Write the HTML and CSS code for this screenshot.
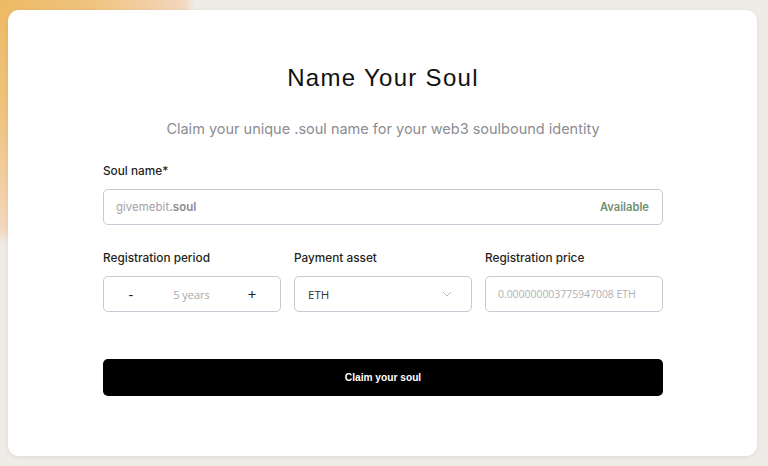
FILE: index.html
```html
<!DOCTYPE html>
<html lang="en">
<head>
<meta charset="utf-8">
<title>Name Your Soul</title>
<link rel="stylesheet" href="styles.css">
</head>
<body>
<main class="card">
  <h1 class="title">Name Your Soul</h1>
  <p class="subtitle">Claim your unique .soul name for your web3 soulbound identity</p>

  <div class="field">
    <label class="label">Soul name*</label>
    <div class="box name-box">
      <span class="name-value">givemebit<b>.soul</b></span>
      <span class="available">Available</span>
    </div>
  </div>

  <div class="row">
    <div class="field">
      <label class="label">Registration period</label>
      <div class="box period-box">
        <span class="step">-</span>
        <span class="period">5 years</span>
        <span class="step">+</span>
      </div>
    </div>
    <div class="field">
      <label class="label">Payment asset</label>
      <div class="box asset-box">
        <span class="asset">ETH</span>
        <svg class="chevron" width="10" height="6" viewBox="0 0 10 6"><path d="M1 1l4 4 4-4" fill="none" stroke="#b9b9c0" stroke-width="1"/></svg>
      </div>
    </div>
    <div class="field">
      <label class="label">Registration price</label>
      <div class="box price-box">
        <span class="price">0.000000003775947008 ETH</span>
      </div>
    </div>
  </div>

  <button class="claim">Claim your soul</button>
</main>
</body>
</html>
```
FILE: styles.css
```css
* { box-sizing: border-box; }
html, body { height: 100%; }
body {
  margin: 0;
  padding: 10px 11px 10px 8px;
  background:
    radial-gradient(ellipse 195px 245px at 0 0, #edba65 0%, #efc37c 45%, #f2cea3 75%, #f3d8bf 94%, rgba(239,236,231,0) 100%),
    #efece7;
  font-family: Inter, "Noto Sans", sans-serif;
}
.card {
  height: 446px;
  background: #fff;
  border-radius: 11px;
  box-shadow: 0 1px 4px rgba(0,0,0,0.08);
  padding: 52px 94px 0 95px;
  display: flex;
  flex-direction: column;
}
.title {
  margin: 0;
  text-align: center;
  font-family: "Liberation Sans", Inter, sans-serif;
  font-weight: 400;
  font-size: 24px;
  line-height: 32px;
  letter-spacing: 1.3px;
  color: #111;
}
.subtitle {
  margin: 25px 0 0;
  text-align: center;
  font-size: 14.5px;
  line-height: 20px;
  color: #8c8c92;
  font-weight: 400;
}
.field {
  display: flex;
  flex-direction: column;
  gap: 9px;
  margin-top: 23px;
}
.label {
  font-size: 11.8px;
  line-height: 18px;
  color: #1f1f22;
  font-weight: 450;
}
.box {
  height: 36px;
  border: 1px solid #c9c9d6;
  border-radius: 5px;
  display: flex;
  align-items: center;
}
.name-box {
  justify-content: space-between;
  padding: 0 13px 0 12px;
  font-size: 11.5px;
}
.name-value { color: #a3a3a8; }
.name-value b { color: #8b8b92; font-weight: 600; }
.available { color: #6f8f72; font-weight: 600; font-size: 11.2px; }
.row {
  display: grid;
  grid-template-columns: repeat(3, 1fr);
  gap: 13px;
  margin-top: 1px;
}
.row .field { margin-top: 23px; }
.period-box {
  justify-content: space-between;
  padding: 0 23px 0 22px;
  font-family: "Open Sans", sans-serif;
}
.step { font-size: 15px; color: #222; width: 10px; text-align: center; }
.period { font-size: 11px; color: #a6a6ab; }
.asset-box {
  justify-content: space-between;
  padding: 0 19px 0 13px;
  font-family: "Open Sans", sans-serif;
}
.asset { font-size: 11.5px; color: #333; }
.price-box {
  padding: 0 12px;
  font-family: "Open Sans", sans-serif;
}
.price { font-size: 10.5px; color: #b0b0b5; letter-spacing: -0.05px; }
.claim {
  margin-top: 47px;
  height: 37px;
  background: #000;
  color: #fff;
  border: 0;
  border-radius: 5px;
  font-family: "Liberation Sans", Arial, sans-serif;
  font-weight: 700;
  font-size: 10.2px;
}
```
